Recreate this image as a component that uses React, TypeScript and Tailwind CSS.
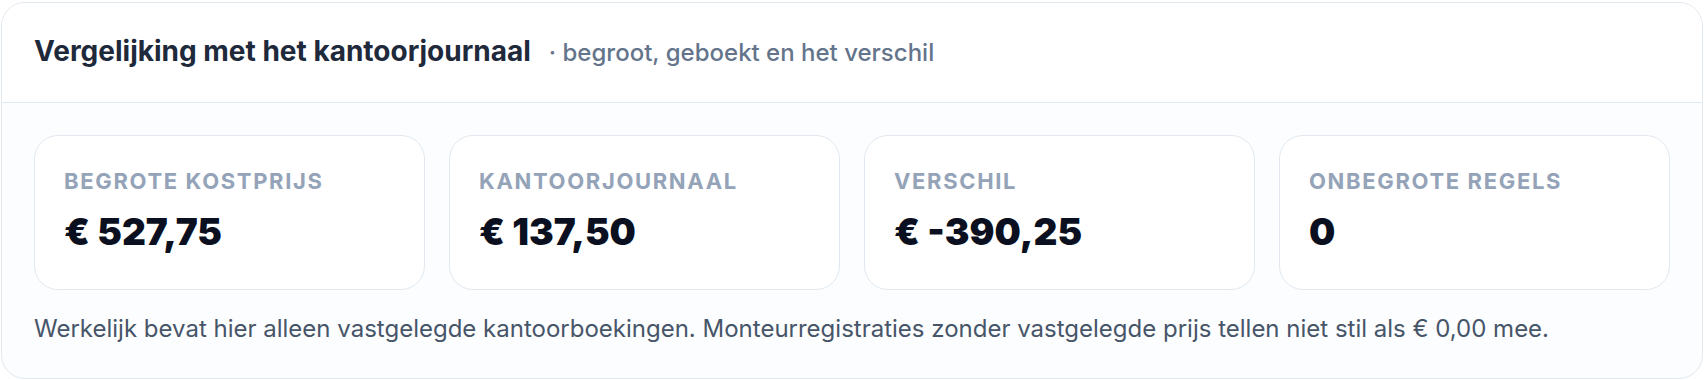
import React from "react";

const stats = [
  { label: "Begrote kostprijs", value: "€ 527,75" },
  { label: "Kantoorjournaal", value: "€ 137,50" },
  { label: "Verschil", value: "€ -390,25" },
  { label: "Onbegrote regels", value: "0" },
];

export default function App() {
  return (
    <div className="min-h-[380px] bg-white px-[1px] pt-[2px] font-['Inter',sans-serif]">
      <section className="overflow-hidden rounded-[24px] border border-[#e2e8f0] bg-[#fcfdfe]">
        {/* Header */}
        <div className="flex items-baseline gap-[18px] border-b border-[#e2e8f0] bg-white px-8 pt-[30px] pb-[31px]">
          <h2 className="text-[28px] leading-9 font-bold text-[#1e293b]">
            Vergelijking met het kantoorjournaal
          </h2>
          <span className="text-[24px] font-medium text-[#64748b]">· begroot, geboekt en het verschil</span>
        </div>

        {/* Body */}
        <div className="px-8 pt-8 pb-[33px]">
          <div className="grid grid-cols-4 gap-6">
            {stats.map((s, i) => (
              <div
                key={i}
                className="min-h-[155px] rounded-[24px] border border-[#e2e8f0] bg-white px-[29px] pt-[31px]"
              >
                <div className="text-[22px] leading-7 font-bold uppercase tracking-[0.075em] text-[#94a3b8]">
                  {s.label}
                </div>
                <div className="mt-4 text-[37px] leading-[42px] font-black text-[#0b1020]">
                  {s.value}
                </div>
              </div>
            ))}
          </div>
          <p className="mt-[23px] text-[24px] leading-8 text-[#475569]">
            Werkelijk bevat hier alleen vastgelegde kantoorboekingen. Monteurregistraties zonder vastgelegde prijs tellen niet stil als € 0,00 mee.
          </p>
        </div>
      </section>
    </div>
  );
}
